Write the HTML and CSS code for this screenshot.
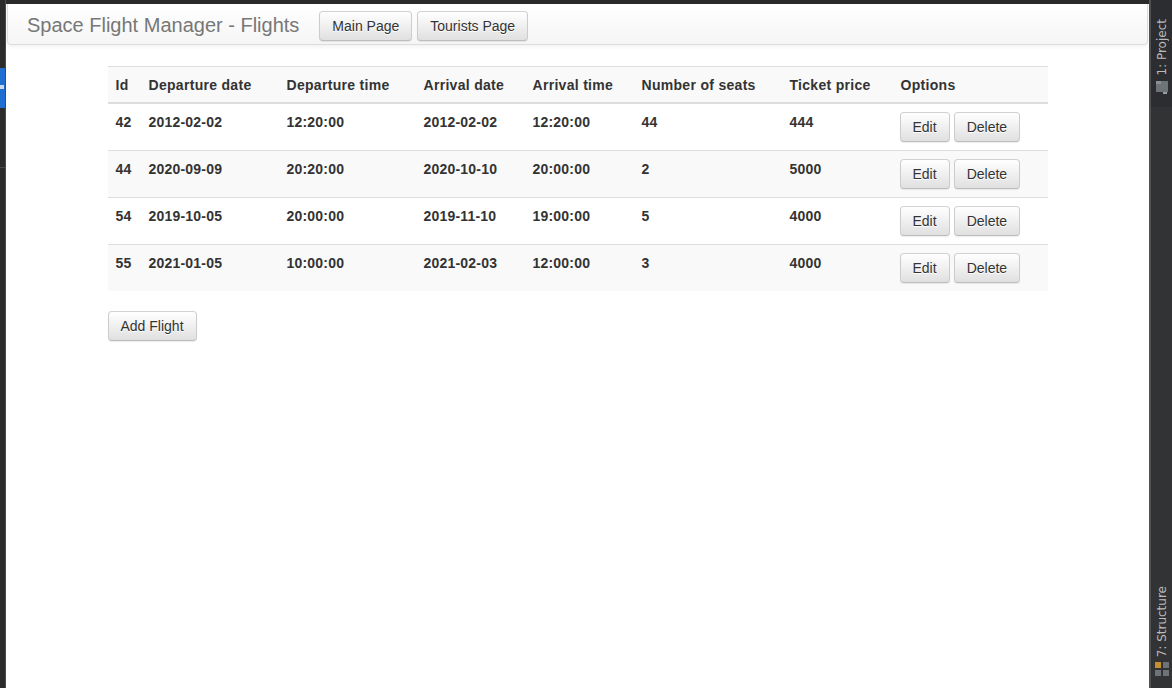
FILE: index.html
```html
<!DOCTYPE html>
<html>
<head>
<meta charset="utf-8">
<title>Space Flight Manager - Flights</title>
<link rel="stylesheet" href="styles.css">
</head>
<body>
<div class="ide">
  <div class="left-strip">
    <div class="blue-tab"><span class="tab-arrow"></span></div>
    <div class="strip-line"></div>
  </div>
  <div class="main">
    <div class="topbar"></div>
    <div class="page">
      <nav class="navbar">
        <span class="brand">Space Flight Manager - Flights</span>
        <button class="btn">Main Page</button>
        <button class="btn">Tourists Page</button>
      </nav>
      <div class="container">
        <table class="table">
          <thead>
            <tr>
              <th class="c-id">Id</th>
              <th class="c-dd">Departure date</th>
              <th class="c-dt">Departure time</th>
              <th class="c-ad">Arrival date</th>
              <th class="c-at">Arrival time</th>
              <th class="c-ns">Number of seats</th>
              <th class="c-tp">Ticket price</th>
              <th class="c-op">Options</th>
            </tr>
          </thead>
          <tbody>
            <tr>
              <td>42</td><td>2012-02-02</td><td>12:20:00</td><td>2012-02-02</td><td>12:20:00</td><td>44</td><td>444</td>
              <td class="opts"><button class="btn">Edit</button><button class="btn">Delete</button></td>
            </tr>
            <tr class="striped">
              <td>44</td><td>2020-09-09</td><td>20:20:00</td><td>2020-10-10</td><td>20:00:00</td><td>2</td><td>5000</td>
              <td class="opts"><button class="btn">Edit</button><button class="btn">Delete</button></td>
            </tr>
            <tr>
              <td>54</td><td>2019-10-05</td><td>20:00:00</td><td>2019-11-10</td><td>19:00:00</td><td>5</td><td>4000</td>
              <td class="opts"><button class="btn">Edit</button><button class="btn">Delete</button></td>
            </tr>
            <tr class="striped">
              <td>55</td><td>2021-01-05</td><td>10:00:00</td><td>2021-02-03</td><td>12:00:00</td><td>3</td><td>4000</td>
              <td class="opts"><button class="btn">Edit</button><button class="btn">Delete</button></td>
            </tr>
          </tbody>
        </table>
        <button class="btn">Add Flight</button>
      </div>
    </div>
  </div>
  <div class="right-panel">
    <div class="rp-top">
      <span class="vtext">1: Project</span>
      <svg class="rp-icon" width="12" height="14" viewBox="0 0 12 14">
        <rect x="0" y="0" width="12" height="11" fill="#6e7378"/>
        <rect x="0" y="0" width="5" height="3" fill="#8a8f94"/>
        <rect x="7" y="11" width="4" height="2" fill="#9a9fa4"/>
      </svg>
    </div>
    <div class="rp-bottom">
      <span class="vtext">7: Structure</span>
      <svg class="rp-icon" width="14" height="14" viewBox="0 0 14 14">
        <rect x="0" y="0" width="6" height="6" fill="#c7902e"/>
        <rect x="8" y="0" width="6" height="6" fill="#6e7378"/>
        <rect x="0" y="8" width="6" height="6" fill="#6e7378"/>
        <rect x="8" y="8" width="6" height="6" fill="#6e7378"/>
      </svg>
    </div>
  </div>
</div>
</body>
</html>
```
FILE: styles.css
```css
* { box-sizing: border-box; }
html, body { margin: 0; padding: 0; height: 100%; }
body {
  background: #2b2b2b;
  font-family: "Liberation Sans", Arial, sans-serif;
  font-size: 14px;
  color: #333;
}
.ide {
  display: flex;
  width: 1172px;
  height: 688px;
  overflow: hidden;
}
.left-strip {
  width: 6px;
  flex: none;
  background: #2b2b2b;
  border-right: 1px solid #4b4b4b;
  padding-top: 68px;
  display: flex;
  flex-direction: column;
}
.blue-tab {
  width: 5px;
  height: 40px;
  background: #1f6fd1;
  display: flex;
  align-items: center;
}
.tab-arrow {
  width: 4px;
  height: 4px;
  background: #c9d8ee;
  margin-top: -2px;
}
.strip-line {
  margin-top: 59px;
  width: 5px;
  height: 1px;
  background: #4a4a4a;
}
.main {
  width: 1143px;
  flex: none;
  display: flex;
  flex-direction: column;
}
.topbar {
  height: 4px;
  background: #2b2b2b;
  flex: none;
}
.page {
  flex: 1;
  background: #fff;
  padding: 0 1px;
}
.navbar {
  height: 41px;
  display: flex;
  align-items: flex-start;
  background-image: linear-gradient(to bottom, #ffffff 0, #f5f5f5 100%);
  border: 1px solid #dddddd;
  border-top: none;
  border-radius: 0 0 4px 4px;
  box-shadow: inset 0 1px 0 rgba(255,255,255,.15), 0 1px 5px rgba(0,0,0,.075);
  padding-left: 19px;
  padding-top: 7px;
}
.brand {
  font-size: 20px;
  line-height: 28px;
  color: #777;
  margin-right: 20px;
  text-shadow: 0 1px 0 rgba(255,255,255,.25);
}
.navbar .btn { margin-right: 5px; }
.btn {
  display: inline-block;
  height: 30px;
  padding: 0 12px;
  font-family: "Liberation Sans", Arial, sans-serif;
  font-size: 14px;
  line-height: 28px;
  color: #333;
  background-image: linear-gradient(to bottom, #ffffff 0, #e0e0e0 100%);
  border: 1px solid #cccccc;
  border-color: #d2d2d2 #cccccc #bdbdbd;
  border-radius: 4px;
  text-shadow: 0 1px 0 #fff;
  box-shadow: inset 0 1px 0 rgba(255,255,255,.15), 0 1px 1px rgba(0,0,0,.075);
  cursor: pointer;
}
.container {
  width: 940px;
  margin: 21px auto 0;
}
.table {
  width: 940px;
  border-collapse: collapse;
  table-layout: fixed;
  margin-bottom: 20px;
}
.table th, .table td {
  padding: 8px;
  line-height: 20px;
  text-align: left;
  vertical-align: top;
  font-weight: bold;
  white-space: nowrap;
}
.table th { letter-spacing: 0.3px; padding-bottom: 7px; }
.table td { letter-spacing: 0.2px; }
.table thead tr {
  background: #f9f9f9;
  border-top: 1px solid #dddddd;
}
.table thead th {
  border-bottom: 2px solid #dddddd;
}
.table tbody td { border-top: 1px solid #dddddd; }
.table tbody tr:first-child td { border-top: none; }
.table tr.striped { background: #f9f9f9; }
.c-id { width: 33px; }
.c-dd { width: 138px; }
.c-dt { width: 137px; }
.c-ad { width: 109px; }
.c-at { width: 109px; }
.c-ns { width: 148px; }
.c-tp { width: 111px; }
.c-op { width: 155px; }
.table td.opts { padding-left: 7px; letter-spacing: 0; }
.opts .btn { margin-right: 4px; font-weight: normal; vertical-align: top; }
.right-panel {
  width: 23px;
  flex: none;
  background: #313335;
  border-left: 2px solid #4e5254;
  display: flex;
  flex-direction: column;
  justify-content: space-between;
}
.rp-top {
  background: #2b2d30;
  height: 107px;
  display: flex;
  flex-direction: column;
  align-items: center;
  padding-top: 19px;
}
.rp-bottom {
  display: flex;
  flex-direction: column;
  align-items: center;
  padding-bottom: 12px;
}
.vtext {
  writing-mode: vertical-rl;
  transform: rotate(180deg);
  font-family: "DejaVu Sans", "Liberation Sans", sans-serif;
  font-size: 12px;
  color: #bbbbbb;
}
.rp-icon { margin-top: 5px; }
```
